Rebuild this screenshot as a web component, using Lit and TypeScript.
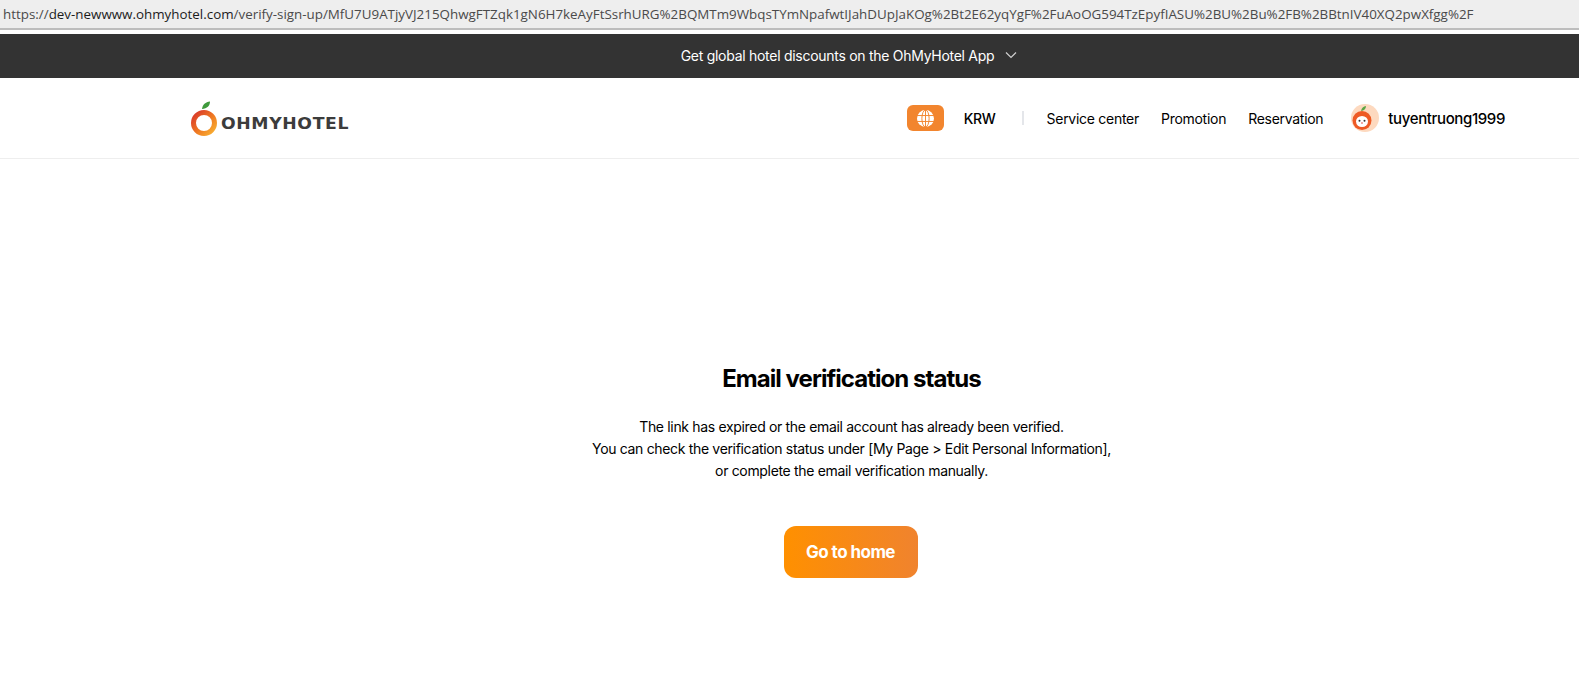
import { LitElement, html, css } from "lit";
import { customElement } from "lit/decorators.js";

const URL_HOST = "dev-newwww.ohmyhotel.com";
const URL_PATH =
  "/verify-sign-up/MfU7U9ATjyVJ215QhwgFTZqk1gN6H7keAyFtSsrhURG%2BQMTm9WbqsTYmNpafwtIJahDUpJaKOg%2Bt2E62yqYgF%2FuAoOG594TzEpyfIASU%2BU%2Bu%2FB%2BBtnIV40XQ2pwXfgg%2F";

@customElement("app-root")
export class AppRoot extends LitElement {
  static styles = css`
    :host {
      display: block;
      width: 100%;
      height: 686px;
      overflow: hidden;
      background: #fff;
      font-family: Inter, "Noto Sans", sans-serif;
      color: #000;
    }
    .url-bar {
      height: 28px;
      padding-left: 3px;
      background: #eeeeee;
      border-bottom: 2px solid #bdbdbd;
      font-family: "Open Sans", "Noto Sans", sans-serif;
      font-size: 13.39px;
      line-height: 29px;
      color: #4a4a4a;
      white-space: nowrap;
    }
    .url-bar b {
      font-weight: 400;
      color: #1c1c1c;
    }
    .banner {
      margin-top: 4px;
      height: 44px;
      box-sizing: border-box;
      padding: 0 0 2px 119px;
      display: flex;
      align-items: center;
      justify-content: center;
      gap: 11px;
      background: #333333;
      color: #fff;
      font-size: 14px;
      letter-spacing: -0.28px;
    }
    .header {
      height: 80px;
      display: flex;
      align-items: center;
      padding: 0 74px 0 190px;
      border-bottom: 1px solid #eeeeee;
    }
    .logo {
      display: flex;
      align-items: flex-end;
      gap: 3px;
      margin-top: 2px;
    }
    .logo-text {
      font-family: "DejaVu Sans", sans-serif;
      font-weight: 700;
      font-size: 15px;
      line-height: 18px;
      letter-spacing: 0.55px;
      color: #3c3c3c;
      margin-bottom: 4px;
      transform: scaleX(1.15);
      transform-origin: left center;
    }
    .nav {
      margin-left: auto;
      display: flex;
      align-items: center;
      font-size: 14px;
      letter-spacing: -0.28px;
    }
    .globe {
      width: 37px;
      height: 26px;
      border-radius: 6px;
      background: #f2852e;
      display: flex;
      align-items: center;
      justify-content: center;
    }
    .krw {
      margin-left: 20px;
      font-weight: 500;
    }
    .sep {
      width: 2px;
      height: 14px;
      margin: 0 23px 0 26px;
      background: #e4e6ea;
    }
    .link {
      margin-right: 22px;
    }
    .user {
      display: flex;
      align-items: center;
      gap: 9px;
      margin-left: 6px;
      font-size: 15px;
      font-weight: 500;
      letter-spacing: -0.37px;
    }
    .main {
      padding: 203px 0 0 124px;
      display: flex;
      flex-direction: column;
      align-items: center;
      text-align: center;
    }
    h1 {
      margin: 0;
      font-size: 24px;
      line-height: 34px;
      font-weight: 700;
      letter-spacing: -0.95px;
    }
    p {
      margin: 20px 0 0;
      font-size: 14px;
      line-height: 22px;
      letter-spacing: -0.33px;
    }
    .home {
      margin: 44px 0 0 -2px;
      width: 134px;
      height: 52px;
      border: 0;
      border-radius: 12px;
      background: linear-gradient(90deg, #ff9000, #f0832e);
      color: #fff;
      font-family: inherit;
      font-size: 17px;
      font-weight: 700;
      letter-spacing: -0.55px;
    }
  `;

  private logoMark() {
    return html`<svg width="28" height="36" viewBox="0 0 28 36">
      <defs>
        <linearGradient id="ring" x1="0" y1="0" x2="1" y2="1">
          <stop offset="0" stop-color="#d8352a" />
          <stop offset="0.55" stop-color="#ef7a22" />
          <stop offset="1" stop-color="#f9b233" />
        </linearGradient>
      </defs>
      <path d="M12 8 C12.500 3.500 15.500 1 20 .5 C20 5 17 7.500 12 8 Z" fill="#3f9a3c" />
      <circle cx="14" cy="22" r="10.500" fill="none" stroke="url(#ring)" stroke-width="5" />
    </svg>`;
  }

  private globeIcon() {
    return html`<svg width="17" height="17" viewBox="0 0 16 16" fill="none">
      <circle cx="8" cy="8" r="8" fill="#fff" />
      <g stroke="#f2852e" stroke-width="0.9">
        <ellipse cx="8" cy="8" rx="3.400" ry="8" />
        <path d="M8 0 V16 M0 5.200 H16 M0 10.800 H16" />
      </g>
    </svg>`;
  }

  private avatar() {
    return html`<svg width="28" height="28" viewBox="0 0 28 28">
      <circle cx="14" cy="14" r="14" fill="#fdd9bf" />
      <path d="M10 7 C10.500 4 12.500 2.500 15 2 C15 5 13 6.800 10 7 Z" fill="#5aa544" />
      <circle cx="11" cy="16.500" r="9.500" fill="#ee5a24" />
      <ellipse cx="11" cy="17.500" rx="6" ry="5.500" fill="#fff" />
      <circle cx="8.500" cy="16.800" r="1" fill="#333" />
      <circle cx="13.500" cy="16.800" r="1" fill="#333" />
      <path d="M10 19 H12" stroke="#e2574c" stroke-width="1" />
    </svg>`;
  }

  protected render() {
    return html`
      <div class="url-bar">https://<b>${URL_HOST}</b>${URL_PATH}</div>
      <div class="banner">
        <span>Get global hotel discounts on the OhMyHotel App</span>
        <svg width="12" height="8" viewBox="0 0 12 8" fill="none" stroke="#d0d0d0" stroke-width="1.200">
          <path d="M1 1.500 L6 6.500 L11 1.500" />
        </svg>
      </div>
      <div class="header">
        <div class="logo">
          ${this.logoMark()}
          <span class="logo-text">OHMYHOTEL</span>
        </div>
        <div class="nav">
          <div class="globe">${this.globeIcon()}</div>
          <span class="krw">KRW</span>
          <span class="sep"></span>
          <span class="link">Service center</span>
          <span class="link">Promotion</span>
          <span class="link">Reservation</span>
          <div class="user">${this.avatar()}<span>tuyentruong1999</span></div>
        </div>
      </div>
      <div class="main">
        <h1>Email verification status</h1>
        <p>
          The link has expired or the email account has already been verified.<br />
          You can check the verification status under [My Page &gt; Edit Personal Information],<br />
          or complete the email verification manually.
        </p>
        <button class="home">Go to home</button>
      </div>
    `;
  }
}

declare global {
  interface HTMLElementTagNameMap {
    "app-root": AppRoot;
  }
}
